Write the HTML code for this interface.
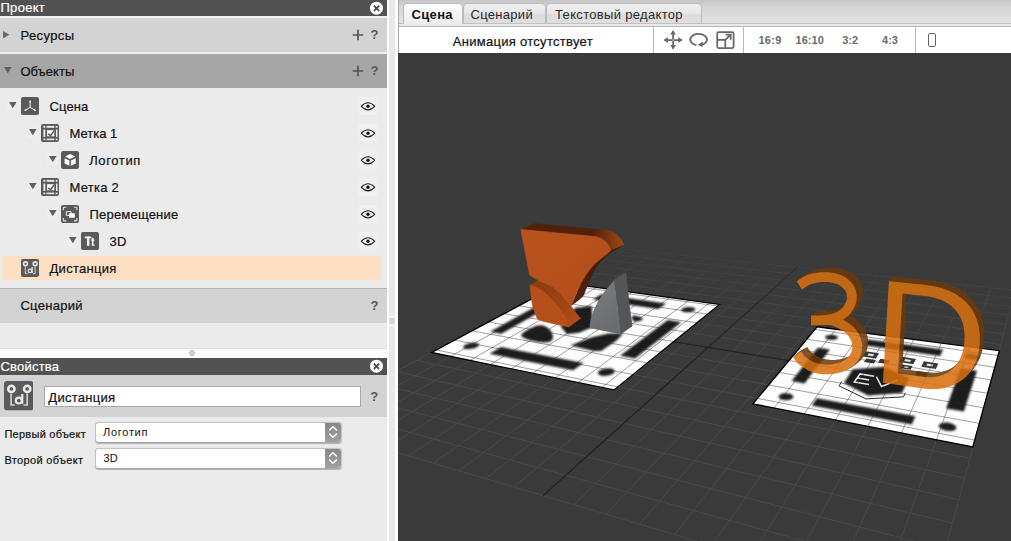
<!DOCTYPE html>
<html><head><meta charset="utf-8">
<style>
html,body{margin:0;padding:0;}
body{-webkit-text-stroke:0.2px;width:1011px;height:541px;overflow:hidden;background:#ebebeb;font-family:"Liberation Sans",sans-serif;font-size:13px;color:#111;position:relative;}
.abs{position:absolute;}
#left{position:absolute;left:0;top:0;width:387px;height:541px;background:#ebebeb;overflow:hidden;}
.hdr{position:absolute;left:0;width:387px;background:#525252;color:#fff;font-size:13px;line-height:15px;}
.hdr span{position:absolute;left:0px;top:0px;}
.sec{position:absolute;left:0;width:387px;}
.sec .t{position:absolute;left:20px;font-size:14px;color:#111;}
.tri-r{position:absolute;width:0;height:0;border-left:6px solid #666;border-top:3.5px solid transparent;border-bottom:3.5px solid transparent;}
.tri-d{position:absolute;width:0;height:0;border-top:6.3px solid #5e5e5e;border-left:3.9px solid transparent;border-right:3.9px solid transparent;}
.row{position:absolute;left:0;width:387px;height:27px;}
.row .lbl{position:absolute;top:4.7px;font-size:13px;line-height:17px;color:#111;white-space:nowrap;}
.ico{position:absolute;width:18px;height:18px;top:4px;}
.eye{position:absolute;left:359px;top:4px;width:18px;height:18px;background:#f0f0f0;}
.st{position:absolute;font-size:13px;line-height:17px;color:#111;white-space:nowrap;}
.pl{position:absolute;font-size:11px;line-height:14px;color:#111;white-space:nowrap;}
.sel{-webkit-text-stroke:0;position:absolute;left:94.6px;width:247px;height:20.5px;box-sizing:border-box;background:#fff;border:1px solid #c4c4c4;border-bottom-color:#a8a8a8;border-radius:4px;box-shadow:0 0.5px 1px rgba(0,0,0,0.25);overflow:hidden;}
.stp{position:absolute;right:-1px;top:-1px;width:16.3px;height:20.5px;background:linear-gradient(#868686,#a2a2a2);}
.tab{-webkit-text-stroke:0;position:absolute;top:3px;height:20.4px;box-sizing:border-box;border:0.9px solid #bcbcbc;border-bottom:none;border-radius:4.5px 4.5px 0 0;background:linear-gradient(#f0f0f0,#e6e6e6 52%,#dcdcdc 53%,#dfdfdf);color:#2a2a2a;font-size:13px;}
.tab span{position:absolute;top:2.3px;line-height:17px;white-space:nowrap;}
.vd{position:absolute;top:27px;width:0.9px;height:26px;background:#b8b8b8;}
.ar{position:absolute;top:32.6px;font-size:11px;line-height:14px;font-weight:bold;color:#6a6a6a;-webkit-text-stroke:0;white-space:nowrap;}
.q{position:absolute;font-size:13px;font-weight:bold;color:#575757;-webkit-text-stroke:0;}
</style></head><body>
<div id="left">
  <div class="hdr" style="top:0;height:15.5px;"><span style="left:0.5px;top:0px;letter-spacing:0.28px">Проект</span><svg class="abs" style="left:369px;top:0.5px" width="15" height="15"><circle cx="7.5" cy="7.2" r="6.5" fill="#fff"/><path d="M4.9 4.6L10.1 9.8M10.1 4.6L4.9 9.8" stroke="#4a4a4a" stroke-width="1.9"/></svg></div>
  <div class="abs" style="left:0;top:15.5px;width:387px;height:2px;background:#f2f2f2;"></div>
  <div class="sec" style="top:17.5px;height:34.5px;background:#d3d3d3;">
    <svg class="abs" style="left:3px;top:13.4px" width="7" height="8"><path d="M0 0V7.4L6.4 3.7Z" fill="#6a6a6a"/></svg>
    <div class="st" style="left:20.4px;top:9.4px;letter-spacing:0.4px">Ресурсы</div>
    <svg class="abs" style="left:352px;top:11.5px" width="12" height="12"><path d="M6 0.7V11.3M0.7 6H11.3" stroke="#555" stroke-width="1.7"/></svg>
    <div class="q" style="left:370.5px;top:9.5px">?</div>
  </div>
  <div class="abs" style="left:0;top:52px;width:387px;height:1.5px;background:#ececec;"></div>
  <div class="sec" style="top:53.5px;height:34.5px;background:#a6a6a6;">
    <svg class="abs" style="left:3.7px;top:13.5px" width="8" height="7"><path d="M0 0H7.6L3.8 6.3Z" fill="#606060"/></svg>
    <div class="st" style="left:20.4px;top:9.2px;letter-spacing:0.04px">Объекты</div>
    <svg class="abs" style="left:352px;top:11.5px" width="12" height="12"><path d="M6 0.7V11.3M0.7 6H11.3" stroke="#555" stroke-width="1.7"/></svg>
    <div class="q" style="left:370.5px;top:9.5px">?</div>
  </div>
  <div id="tree">
<svg width="0" height="0" style="position:absolute">
<defs>
<symbol id="i-scene" viewBox="0 0 18 18"><rect width="18" height="18" rx="2" fill="#5a5a5a"/><g stroke="#f0f0f0" stroke-width="1" stroke-linecap="round" fill="none"><path d="M9.1 10.3V4.6M9.1 10.3L4.6 13.1M9.1 10.3L13.8 13.1"/></g><circle cx="9.1" cy="4.5" r="0.9" fill="#fff"/><circle cx="4.5" cy="13.2" r="0.9" fill="#fff"/><circle cx="13.9" cy="13.2" r="0.9" fill="#fff"/></symbol>
<symbol id="i-marker" viewBox="0 0 18 18"><rect width="18" height="18" rx="2" fill="#5a5a5a"/><g fill="#ececec"><rect x="2.4" y="1.9" width="1.9" height="1.9"/><rect x="5.6" y="1.9" width="7.7" height="1.9"/><rect x="14.7" y="1.9" width="1.9" height="1.9"/><rect x="2.4" y="5.5" width="1.9" height="7.5"/><rect x="15" y="5.5" width="1.5" height="7.5"/><rect x="2.4" y="14.6" width="1.9" height="1.6"/><rect x="5.6" y="14.6" width="7.7" height="1.6"/><rect x="14.7" y="14.6" width="1.9" height="1.6"/></g><rect x="6.1" y="6.2" width="7.2" height="6.1" fill="#fff"/><path d="M7.2 9.7L9.4 11.8L13.2 6.7" stroke="#5a5a5a" stroke-width="1.5" fill="none"/></symbol>
<symbol id="i-cube" viewBox="0 0 18 18"><rect width="18" height="18" rx="2" fill="#5a5a5a"/><g fill="#fff"><path d="M9 2.9L14.2 5.5L9 7.9L4.2 5.5Z"/><path d="M3.6 7.2L8.4 9.4V14.7L3.6 12.5Z"/><path d="M9.9 9.4L14.7 7.2V12.5L9.9 14.7Z"/></g></symbol>
<symbol id="i-move" viewBox="0 0 18 18"><rect width="18" height="18" rx="2" fill="#5a5a5a"/><g stroke="#e6e6e6" stroke-width="1.1" fill="none"><path d="M2.3 5.3V3.3Q2.3 2.3 3.3 2.3H5.3M12.9 2.3H14.9Q15.9 2.3 15.9 3.3V5.3M15.9 12.9V14.9Q15.9 15.9 14.9 15.9H12.9M5.3 15.9H3.3Q2.3 15.9 2.3 14.9V12.9"/><rect x="5.3" y="6.5" width="4.8" height="4" rx="1"/></g><rect x="7.9" y="8.2" width="6" height="4.5" rx="0.6" fill="#fff"/></symbol>
<symbol id="i-text" viewBox="0 0 18 18"><rect width="18" height="18" rx="2" fill="#5a5a5a"/><g fill="#f4f4f4"><rect x="3.8" y="4.5" width="6.5" height="1.8"/><rect x="6" y="4.5" width="2.4" height="9.3"/><rect x="10.8" y="5.8" width="1.8" height="8"/><rect x="10.1" y="7.5" width="3.4" height="1.2"/><rect x="11.5" y="12.6" width="2" height="1.2"/></g></symbol>
<symbol id="i-dist" viewBox="0 0 18 18"><rect width="18" height="18" rx="2" fill="#5a5a5a"/><g stroke="#e8e8e8" fill="none"><circle cx="4.5" cy="4.8" r="1.9" stroke-width="1.6"/><circle cx="14.1" cy="4.8" r="1.9" stroke-width="1.6"/><path d="M4.3 7.6V14.6H6.6M14.1 7.6V14.6H11.8" stroke-width="1" stroke="#d4d4d4"/><circle cx="9" cy="11.9" r="1.8" stroke-width="1.3"/><path d="M11.1 7.9V13.9" stroke-width="1.3"/></g></symbol>
<symbol id="i-eye" viewBox="0 0 18 18"><path d="M2.3 9.4Q9 2.2 15.7 9.4Q9 16.4 2.3 9.4Z" fill="#f6f6f6" stroke="#222" stroke-width="1.1"/><circle cx="9" cy="9.3" r="1.7" fill="#111"/></symbol>
</defs></svg>
<div class="row" style="top:93px"><div class="abs" style="left:7px;top:6.5px;width:11px;height:11px;background:#eeeeee"></div><svg class="abs" style="left:9px;top:9px" width="8" height="7"><path d="M0 0H7.6L3.8 6.3Z" fill="#606060"/></svg><svg class="ico" style="left:21px"><use href="#i-scene"/></svg><div class="lbl" style="left:49.5px;letter-spacing:0.12px">Сцена</div><div class="eye"><svg width="18" height="18" style="position:absolute;left:0;top:0"><use href="#i-eye"/></svg></div></div>
<div class="row" style="top:120px"><div class="abs" style="left:27px;top:6.5px;width:11px;height:11px;background:#eeeeee"></div><svg class="abs" style="left:29px;top:9px" width="8" height="7"><path d="M0 0H7.6L3.8 6.3Z" fill="#606060"/></svg><svg class="ico" style="left:41px"><use href="#i-marker"/></svg><div class="lbl" style="left:69.5px;letter-spacing:0px">Метка 1</div><div class="eye"><svg width="18" height="18" style="position:absolute;left:0;top:0"><use href="#i-eye"/></svg></div></div>
<div class="row" style="top:147px"><div class="abs" style="left:47px;top:6.5px;width:11px;height:11px;background:#eeeeee"></div><svg class="abs" style="left:49px;top:9px" width="8" height="7"><path d="M0 0H7.6L3.8 6.3Z" fill="#606060"/></svg><svg class="ico" style="left:61px"><use href="#i-cube"/></svg><div class="lbl" style="left:89.2px;letter-spacing:0.62px">Логотип</div><div class="eye"><svg width="18" height="18" style="position:absolute;left:0;top:0"><use href="#i-eye"/></svg></div></div>
<div class="row" style="top:174px"><div class="abs" style="left:27px;top:6.5px;width:11px;height:11px;background:#eeeeee"></div><svg class="abs" style="left:29px;top:9px" width="8" height="7"><path d="M0 0H7.6L3.8 6.3Z" fill="#606060"/></svg><svg class="ico" style="left:41px"><use href="#i-marker"/></svg><div class="lbl" style="left:69.5px;letter-spacing:0.24px">Метка 2</div><div class="eye"><svg width="18" height="18" style="position:absolute;left:0;top:0"><use href="#i-eye"/></svg></div></div>
<div class="row" style="top:201px"><div class="abs" style="left:47px;top:6.5px;width:11px;height:11px;background:#eeeeee"></div><svg class="abs" style="left:49px;top:9px" width="8" height="7"><path d="M0 0H7.6L3.8 6.3Z" fill="#606060"/></svg><svg class="ico" style="left:61px"><use href="#i-move"/></svg><div class="lbl" style="left:89.5px;letter-spacing:0.2px">Перемещение</div><div class="eye"><svg width="18" height="18" style="position:absolute;left:0;top:0"><use href="#i-eye"/></svg></div></div>
<div class="row" style="top:228px"><div class="abs" style="left:67px;top:6.5px;width:11px;height:11px;background:#eeeeee"></div><svg class="abs" style="left:69px;top:9px" width="8" height="7"><path d="M0 0H7.6L3.8 6.3Z" fill="#606060"/></svg><svg class="ico" style="left:81px"><use href="#i-text"/></svg><div class="lbl" style="left:109.5px;letter-spacing:0.3px">3D</div><div class="eye"><svg width="18" height="18" style="position:absolute;left:0;top:0"><use href="#i-eye"/></svg></div></div>
<div class="row" style="top:255px"><div class="abs" style="left:2px;top:1.4px;width:380px;height:23.8px;background:#fde0c4;"></div><svg class="ico" style="left:21px"><use href="#i-dist"/></svg><div class="lbl" style="left:49.5px;letter-spacing:0.28px">Дистанция</div></div>
</div>
  <div class="abs" style="left:0;top:287.5px;width:387px;height:1px;background:#b5b5b5;"></div>
  <div class="sec" style="top:288.5px;height:34px;background:#d3d3d3;">
    <div class="st" style="left:20.4px;top:8.7px;letter-spacing:0.3px">Сценарий</div>
    <div class="q" style="left:370.5px;top:9.5px">?</div>
  </div>
  <div class="abs" style="left:0;top:347.9px;width:387px;height:0.8px;background:#dedede;"></div><div class="abs" style="left:0;top:348.7px;width:387px;height:9.3px;background:#fdfdfd;"></div><div class="abs" style="left:189px;top:350px;width:6px;height:6px;box-sizing:border-box;border-radius:50%;background:#d2d2d2;border:0.6px solid #bdbdbd;"></div>
  <div class="hdr" style="top:358px;height:17px;"><span style="left:0.5px;top:1px;letter-spacing:0.2px">Свойства</span><svg class="abs" style="left:369px;top:1.4px" width="15" height="15"><circle cx="7.5" cy="7.2" r="6.5" fill="#fff"/><path d="M4.9 4.6L10.1 9.8M10.1 4.6L4.9 9.8" stroke="#4a4a4a" stroke-width="1.9"/></svg></div>
  <div class="sec" style="top:375px;height:41.7px;background:#d3d3d3;">
    <svg class="abs" style="left:3.7px;top:6px" width="29.6" height="29.6"><use href="#i-dist"/></svg>
    <div class="abs" style="left:44px;top:10.5px;width:316.5px;height:21.4px;box-sizing:border-box;background:#fff;border:1px solid #a9a9a9;"></div>
    <div class="st" style="left:48.3px;top:14.1px;letter-spacing:0.28px">Дистанция</div>
    <div class="q" style="left:370.3px;top:13.5px">?</div>
  </div>
  <div class="pl" style="left:4.4px;top:426.7px;letter-spacing:0.27px">Первый объект</div>
  <div class="pl" style="left:4.4px;top:453.3px;letter-spacing:0.35px">Второй объект</div>
  <div class="sel" style="top:422.1px"><div class="pl" style="left:7.5px;top:1.9px;letter-spacing:0.7px">Логотип</div><div class="stp"><svg width="16" height="20"><path d="M4.6 8L8 4.7L11.4 8M4.6 12L8 15.3L11.4 12" stroke="#fff" stroke-width="1.5" fill="none" stroke-linecap="round" stroke-linejoin="round"/></svg></div></div>
  <div class="sel" style="top:448px"><div class="pl" style="left:7.8px;top:1.6px;letter-spacing:0.2px">3D</div><div class="stp"><svg width="16" height="20"><path d="M4.6 8L8 4.7L11.4 8M4.6 12L8 15.3L11.4 12" stroke="#fff" stroke-width="1.5" fill="none" stroke-linecap="round" stroke-linejoin="round"/></svg></div></div>
</div>
<div class="abs" style="left:387px;top:0;width:11px;height:541px;background:#fcfcfc;"></div>
<div class="abs" style="left:389.3px;top:0;width:5.8px;height:541px;background:#e9e9e9;"></div>
<div class="abs" style="left:389.3px;top:316px;width:5.8px;height:9.6px;background:#fafafa;"></div>
<div class="abs" style="left:389.3px;top:316.8px;width:5.8px;height:8px;background:#e9e9e9;"></div>
<div class="abs" style="left:388.9px;top:317.9px;width:5.8px;height:5.8px;border-radius:50%;background:#d4d4d4;"></div>
<div id="right" class="abs" style="left:398px;top:0;width:613px;height:541px;background:#3a3a3a;overflow:hidden;">
<!--SCENE--><svg class="abs" style="left:0;top:53px" width="613" height="488" viewBox="0 0 613 488">
<defs>
<filter id="bl1" x="-5%" y="-5%" width="110%" height="110%"><feGaussianBlur stdDeviation="1.2 0.85"/></filter>
<filter id="bl2" x="-5%" y="-5%" width="110%" height="110%"><feGaussianBlur stdDeviation="1.25 0.95"/></filter>
<filter id="bl3" x="-5%" y="-5%" width="110%" height="110%"><feGaussianBlur stdDeviation="0.7 0.55"/></filter>
<linearGradient id="gfade" x1="0" y1="190" x2="0" y2="330" gradientUnits="userSpaceOnUse"><stop offset="0" stop-color="#fff" stop-opacity="0.35"/><stop offset="1" stop-color="#fff" stop-opacity="1"/></linearGradient>
<mask id="gm" maskUnits="userSpaceOnUse" x="0" y="0" width="613" height="488"><rect width="613" height="488" fill="url(#gfade)"/></mask>
<clipPath id="c1"><polygon points="33.5,299.5 216.0,336.9 321.5,251.4 164.0,229.6"/></clipPath>
<clipPath id="c2"><polygon points="354.9,350.8 574.8,394.0 601.4,297.7 419.1,273.8"/></clipPath>
</defs>
<rect width="613" height="488" fill="#3a3a3a"/>
<g mask="url(#gm)" fill="none"><path d="M-99.7 370.3L227.7 196.4M-99.7 370.3L531.0 556.6M-79.3 376.3L243.1 198.0M-72.9 356.0L539.6 524.8M-58.2 382.5L258.9 199.7M-47.7 342.6L547.4 496.2M-36.2 389.0L275.1 201.4M-24.2 330.1L554.4 470.2M-13.3 395.8L291.6 203.1M-2.1 318.4L560.8 446.7M10.4 402.8L308.5 204.9M18.7 307.4L566.6 425.1M35.2 410.1L325.8 206.7M38.2 297.0L571.9 405.3M61.0 417.7L343.5 208.6M56.7 287.2L576.9 387.2M87.8 425.7L361.6 210.5M74.2 277.9L581.4 370.4M115.9 434.0L380.1 212.4M90.7 269.1L585.6 354.8M175.9 451.7L418.5 216.5M121.3 252.9L593.2 326.9M207.9 461.1L438.4 218.6M135.4 245.4L596.6 314.3M241.6 471.1L458.9 220.7M148.9 238.2L599.8 302.5M276.8 481.5L479.8 222.9M161.7 231.4L602.8 291.5M313.9 492.4L501.3 225.2M174.0 224.9L605.6 281.1M352.8 503.9L523.3 227.5M185.7 218.7L608.2 271.4M393.8 516.1L545.9 229.9M196.9 212.7L610.7 262.2M437.1 528.8L569.1 232.4M207.6 207.0L613.1 253.5M482.7 542.3L592.9 234.9M217.8 201.6L615.3 245.2M531.0 556.6L617.4 237.4M227.7 196.4L617.4 237.4" stroke="#4c4c4c" stroke-width="0.85"/><path d="M145.2 442.6L399.1 214.4M106.4 260.8L589.5 340.3" stroke="#202020" stroke-width="1.2"/></g>
<polygon points="33.5,299.5 216.0,336.9 321.5,251.4 164.0,229.6" fill="#fdfdfd"/>
<g clip-path="url(#c1)"><g filter="url(#bl1)" fill="#1f1f1f"><polygon points="79.1,294.0 80.4,293.0 81.1,292.0 81.0,291.1 80.1,290.4 78.5,289.9 76.5,289.7 74.1,289.8 71.6,290.2 69.3,290.9 67.3,291.7 66.0,292.7 65.3,293.7 65.3,294.7 66.2,295.4 67.7,295.9 69.8,296.1 72.2,296.0 74.8,295.6 77.1,294.9"/><polygon points="215.4,320.5 216.4,319.3 216.7,318.1 216.2,317.0 214.8,316.1 212.9,315.6 210.5,315.3 207.9,315.4 205.3,315.9 203.0,316.7 201.2,317.7 200.1,318.9 199.8,320.1 200.3,321.2 201.6,322.1 203.5,322.7 206.0,322.9 208.6,322.8 211.3,322.3 213.6,321.5"/><polygon points="296.5,257.5 297.2,256.7 297.2,255.9 296.5,255.1 295.2,254.5 293.4,254.2 291.4,254.0 289.2,254.1 287.1,254.5 285.3,255.0 284.0,255.7 283.3,256.5 283.2,257.4 283.9,258.1 285.1,258.7 286.9,259.1 289.0,259.3 291.2,259.2 293.4,258.8 295.2,258.3"/><polygon points="174.7,239.9 175.6,239.2 175.9,238.5 175.6,237.9 174.6,237.3 173.2,237.0 171.4,236.9 169.3,237.0 167.3,237.3 165.5,237.8 164.0,238.4 163.1,239.1 162.7,239.8 163.0,240.5 163.9,241.0 165.4,241.4 167.3,241.5 169.3,241.4 171.4,241.1 173.2,240.6"/><polygon points="91.6,300.8 175.1,317.3 185.6,309.9 103.0,294.1"/><polygon points="222.1,302.8 236.9,305.5 283.4,269.2 269.7,267.1"/><polygon points="92.2,278.7 103.4,280.7 157.5,250.1 146.9,248.4"/><polygon points="194.8,246.4 260.3,256.0 268.2,250.4 203.4,241.2"/><polygon points="123.6,281.0 127.6,277.9 132.8,275.1 139.0,272.5 144.3,272.3 148.9,274.3 152.3,277.2 154.4,280.8 155.0,284.2 154.0,287.3 151.2,289.1 146.5,289.6 140.5,289.1 133.2,287.5 127.5,285.7 123.5,283.6"/><polygon points="236.1,262.6 241.2,263.5 244.1,264.7 244.8,266.1 243.9,267.2 241.3,268.1 238.6,268.4 235.8,268.2 234.2,266.6 233.8,263.6"/><polygon points="162.5,273.2 177.3,254.7 193.8,252.9 194.7,274.1 181.0,279.7 168.8,281.0"/><polygon points="172.5,292.6 193.9,284.3 210.5,280.6 225.2,280.6 217.9,288.0 203.1,298.1 195.7,298.1"/></g><path d="M-99.7 370.3L227.7 196.4M-99.7 370.3L531.0 556.6M-79.3 376.3L243.1 198.0M-72.9 356.0L539.6 524.8M-58.2 382.5L258.9 199.7M-47.7 342.6L547.4 496.2M-36.2 389.0L275.1 201.4M-24.2 330.1L554.4 470.2M-13.3 395.8L291.6 203.1M-2.1 318.4L560.8 446.7M10.4 402.8L308.5 204.9M18.7 307.4L566.6 425.1M35.2 410.1L325.8 206.7M38.2 297.0L571.9 405.3M61.0 417.7L343.5 208.6M56.7 287.2L576.9 387.2M87.8 425.7L361.6 210.5M74.2 277.9L581.4 370.4M115.9 434.0L380.1 212.4M90.7 269.1L585.6 354.8M175.9 451.7L418.5 216.5M121.3 252.9L593.2 326.9M207.9 461.1L438.4 218.6M135.4 245.4L596.6 314.3M241.6 471.1L458.9 220.7M148.9 238.2L599.8 302.5M276.8 481.5L479.8 222.9M161.7 231.4L602.8 291.5M313.9 492.4L501.3 225.2M174.0 224.9L605.6 281.1M352.8 503.9L523.3 227.5M185.7 218.7L608.2 271.4M393.8 516.1L545.9 229.9M196.9 212.7L610.7 262.2M437.1 528.8L569.1 232.4M207.6 207.0L613.1 253.5M482.7 542.3L592.9 234.9M217.8 201.6L615.3 245.2M531.0 556.6L617.4 237.4M227.7 196.4L617.4 237.4M145.2 442.6L399.1 214.4M106.4 260.8L589.5 340.3" stroke="#2a2a2a" stroke-width="0.55" stroke-opacity="0.8" fill="none"/></g>
<polygon points="33.5,299.5 216.0,336.9 321.5,251.4 164.0,229.6" fill="none" stroke="#000" stroke-width="1.3"/>
<polygon points="354.9,350.8 574.8,394.0 601.4,297.7 419.1,273.8" fill="#fdfdfd"/>
<g clip-path="url(#c2)"><g filter="url(#bl2)" fill="#1f1f1f"><polygon points="394.8,345.0 395.3,343.9 395.0,342.8 394.0,341.8 392.4,340.9 390.5,340.4 388.2,340.2 386.0,340.3 383.9,340.7 382.2,341.5 381.1,342.4 380.6,343.5 380.9,344.6 381.8,345.6 383.4,346.5 385.4,347.0 387.6,347.3 389.9,347.1 392.0,346.7 393.7,345.9"/><polygon points="558.2,375.4 558.2,374.1 557.3,372.8 555.7,371.5 553.5,370.5 550.9,369.8 548.2,369.5 545.6,369.7 543.4,370.2 541.8,371.1 540.9,372.2 540.9,373.5 541.7,374.8 543.3,376.1 545.5,377.1 548.1,377.8 550.9,378.1 553.5,378.0 555.8,377.5 557.4,376.6"/><polygon points="581.2,304.7 581.2,303.7 580.4,302.8 578.9,302.0 577.0,301.3 574.8,300.8 572.5,300.7 570.3,300.8 568.5,301.2 567.2,301.8 566.5,302.6 566.5,303.5 567.3,304.5 568.7,305.3 570.6,306.0 572.9,306.5 575.2,306.6 577.4,306.5 579.3,306.1 580.6,305.5"/><polygon points="439.6,285.2 439.8,284.4 439.5,283.6 438.5,282.9 437.1,282.3 435.3,282.0 433.4,281.8 431.4,281.9 429.7,282.3 428.3,282.8 427.4,283.5 427.1,284.3 427.5,285.1 428.4,285.8 429.8,286.4 431.6,286.8 433.6,286.9 435.6,286.8 437.3,286.5 438.7,285.9"/><polygon points="413.7,352.6 513.8,371.5 517.4,363.2 418.8,345.2"/><polygon points="548.1,355.5 565.9,358.6 579.0,317.8 562.7,315.4"/><polygon points="393.6,328.1 406.6,330.4 431.9,296.5 419.8,294.7"/><polygon points="466.0,292.3 542.2,302.9 545.0,296.6 469.8,286.5"/><polygon points="486.3,313.8 511.1,325.1 503.9,339.9 470.0,342.4 445.9,330.1 454.8,316.2"/></g><g filter="url(#bl3)"><g fill="#383838"><polygon points="464.5,303.4 477.9,305.4 481.0,300.2 467.8,298.3"/><polygon points="501.2,309.1 515.3,311.2 518.0,305.9 504.1,303.8"/><polygon points="523.3,313.8 537.9,316.0 540.3,310.4 525.9,308.3"/><polygon points="465.9,309.1 475.8,310.6 478.0,306.9 468.3,305.4"/><polygon points="480.1,309.6 490.1,311.1 492.2,307.3 482.3,305.8"/><polygon points="502.2,315.3 512.6,316.8 514.5,312.9 504.2,311.4"/><polygon points="517.2,322.0 527.9,323.7 529.7,319.6 519.1,318.0"/></g><g fill="#e4e4e4"><polygon points="469.4,302.4 475.0,303.2 476.2,301.2 470.6,300.4"/><polygon points="506.2,308.1 512.0,308.9 513.1,306.9 507.2,306.1"/><polygon points="528.3,312.7 534.4,313.6 535.3,311.5 529.3,310.6"/><polygon points="506.0,314.5 510.0,315.1 510.7,313.7 506.8,313.1"/></g><path d="M476.2 323.2L462.1 320.9L456.3 329.0L471.0 331.4M459.2 324.9L471.2 326.9M478.4 323.7L483.5 333.5L499.5 327.1" stroke="#e8e8e8" stroke-width="1.5" fill="none"/><path d="M443.8 328.5L441.0 332.9L468.0 345.9L505.4 343.9L507.4 339.7" stroke="#2c2c2c" stroke-width="1" fill="none"/></g><path d="M-99.7 370.3L227.7 196.4M-99.7 370.3L531.0 556.6M-79.3 376.3L243.1 198.0M-72.9 356.0L539.6 524.8M-58.2 382.5L258.9 199.7M-47.7 342.6L547.4 496.2M-36.2 389.0L275.1 201.4M-24.2 330.1L554.4 470.2M-13.3 395.8L291.6 203.1M-2.1 318.4L560.8 446.7M10.4 402.8L308.5 204.9M18.7 307.4L566.6 425.1M35.2 410.1L325.8 206.7M38.2 297.0L571.9 405.3M61.0 417.7L343.5 208.6M56.7 287.2L576.9 387.2M87.8 425.7L361.6 210.5M74.2 277.9L581.4 370.4M115.9 434.0L380.1 212.4M90.7 269.1L585.6 354.8M175.9 451.7L418.5 216.5M121.3 252.9L593.2 326.9M207.9 461.1L438.4 218.6M135.4 245.4L596.6 314.3M241.6 471.1L458.9 220.7M148.9 238.2L599.8 302.5M276.8 481.5L479.8 222.9M161.7 231.4L602.8 291.5M313.9 492.4L501.3 225.2M174.0 224.9L605.6 281.1M352.8 503.9L523.3 227.5M185.7 218.7L608.2 271.4M393.8 516.1L545.9 229.9M196.9 212.7L610.7 262.2M437.1 528.8L569.1 232.4M207.6 207.0L613.1 253.5M482.7 542.3L592.9 234.9M217.8 201.6L615.3 245.2M531.0 556.6L617.4 237.4M227.7 196.4L617.4 237.4M145.2 442.6L399.1 214.4M106.4 260.8L589.5 340.3" stroke="#2a2a2a" stroke-width="0.55" stroke-opacity="0.8" fill="none"/></g>
<polygon points="354.9,350.8 574.8,394.0 601.4,297.7 419.1,273.8" fill="none" stroke="#000" stroke-width="1.3"/>
<defs>
<linearGradient id="gTop" gradientUnits="userSpaceOnUse" x1="196" y1="0" x2="226" y2="0"><stop offset="0" stop-color="#52210b"/><stop offset="0.5" stop-color="#7c3511"/><stop offset="1" stop-color="#a54a17"/></linearGradient>
<linearGradient id="gBand" gradientUnits="userSpaceOnUse" x1="136" y1="232" x2="180" y2="270"><stop offset="0" stop-color="#8a3b10"/><stop offset="0.6" stop-color="#a04616"/><stop offset="1" stop-color="#b04e19"/></linearGradient>
<linearGradient id="gFront" gradientUnits="userSpaceOnUse" x1="125" y1="180" x2="200" y2="260"><stop offset="0" stop-color="#b9521d"/><stop offset="1" stop-color="#b24e1a"/></linearGradient>
<linearGradient id="gInner" gradientUnits="userSpaceOnUse" x1="215" y1="195" x2="178" y2="250"><stop offset="0" stop-color="#3a1707"/><stop offset="1" stop-color="#54230c"/></linearGradient>
<linearGradient id="gGl" gradientUnits="userSpaceOnUse" x1="195" y1="240" x2="222" y2="275"><stop offset="0" stop-color="#76787b"/><stop offset="1" stop-color="#696b6e"/></linearGradient>
</defs>
<polygon points="122.9,176.5 136.6,170.3 208.4,176.9 208.4,176.9 209.1,177.1 209.9,177.3 211.0,177.6 212.2,178.0 213.4,178.4 214.6,178.8 215.7,179.3 216.7,179.8 217.6,180.4 218.4,181.1 219.2,181.8 219.9,182.6 220.7,183.4 221.3,184.2 222.0,185.0 222.6,185.8 223.2,186.6 223.7,187.4 224.3,188.3 224.8,189.1 225.2,189.9 225.6,190.6 225.9,191.2 226.2,191.7 212.9,197.6 212.9,197.6 212.7,197.1 212.5,196.5 212.2,195.8 211.9,195.0 211.5,194.1 211.1,193.3 210.7,192.4 210.2,191.7 209.7,191.0 209.1,190.3 208.4,189.5 207.7,188.8 207.0,188.2 206.2,187.5 205.5,186.9 204.8,186.4 204.0,185.9 203.2,185.5 202.4,185.1 201.5,184.8 200.7,184.5 200.0,184.2 199.4,184.0 198.9,183.8" fill="url(#gTop)"/>
<polygon points="212.9,197.6 212.3,198.1 211.5,198.8 210.5,199.6 209.5,200.4 208.3,201.4 207.2,202.3 206.0,203.3 204.9,204.2 203.8,205.1 202.7,205.9 201.6,206.8 200.5,207.7 199.3,208.6 198.2,209.5 197.1,210.5 196.0,211.6 194.9,212.7 193.9,214.0 192.8,215.2 191.8,216.5 190.8,217.9 189.8,219.2 188.8,220.6 187.9,222.0 187.0,223.4 186.1,224.9 185.2,226.3 184.4,227.8 183.5,229.3 182.7,230.8 182.0,232.3 181.2,233.8 180.5,235.3 179.8,236.8 179.1,238.4 178.5,240.0 177.8,241.5 177.2,242.9 176.6,244.3 176.1,245.6 175.6,246.8 175.0,248.0 174.5,249.1 174.0,250.2 173.6,251.2 173.2,252.0 172.9,252.7 172.6,253.3 172.6,253.3 173.5,252.6 174.9,251.6 176.4,250.5 178.2,249.2 179.9,247.9 181.6,246.6 183.0,245.3 184.2,244.2 185.0,243.2 185.7,242.3 186.1,241.4 186.5,240.6 186.8,239.7 187.1,238.8 187.5,237.9 187.9,236.8 188.4,235.6 188.9,234.4 189.5,233.1 190.0,231.8 190.6,230.4 191.1,229.1 191.7,227.7 192.3,226.4 192.9,225.1 193.5,223.8 194.1,222.5 194.7,221.1 195.4,219.8 196.0,218.5 196.7,217.3 197.5,216.0 198.3,214.7 199.2,213.5 200.0,212.2 201.0,211.0 201.9,209.8 202.9,208.6 203.9,207.5 204.9,206.4 205.9,205.4 206.9,204.4 208.0,203.5 209.0,202.6 210.1,201.7 211.3,200.8 212.5,199.9 213.8,199.0 215.3,198.0 216.9,197.0 218.7,195.9 220.6,194.9 222.3,193.9 223.9,193.0 225.2,192.3 226.2,191.7" fill="url(#gInner)"/>
<polygon points="132.1,232.2 132.6,232.4 133.4,232.6 134.2,232.8 135.1,233.1 136.2,233.4 137.2,233.8 138.2,234.2 139.2,234.7 140.1,235.2 141.1,235.7 142.0,236.3 143.0,236.9 144.0,237.6 145.0,238.4 146.1,239.3 147.3,240.3 148.6,241.5 149.9,242.9 151.4,244.3 152.8,245.9 154.3,247.6 155.8,249.2 157.2,250.9 158.5,252.5 159.8,254.1 161.1,255.8 162.4,257.6 163.6,259.4 164.8,261.1 165.9,262.7 166.9,264.3 167.7,265.7 168.4,267.0 169.0,268.3 169.4,269.5 169.8,270.6 170.1,271.6 170.3,272.5 170.5,273.3 170.7,273.9 182.6,265.5 182.2,265.0 181.8,264.4 181.2,263.7 180.5,262.9 179.9,262.1 179.2,261.2 178.5,260.4 177.9,259.6 177.3,258.9 176.8,258.1 176.2,257.4 175.7,256.6 175.1,255.9 174.5,255.1 173.9,254.3 173.3,253.5 172.7,252.7 172.1,251.9 171.5,251.1 170.9,250.3 170.3,249.4 169.5,248.5 168.7,247.5 167.7,246.4 166.6,245.2 165.4,243.8 164.1,242.4 162.7,240.8 161.3,239.3 159.8,237.9 158.2,236.5 156.5,235.2 154.6,234.0 152.5,232.8 150.2,231.7 147.9,230.6 145.7,229.6 143.6,228.7 142.0,228.0 140.7,227.4" fill="url(#gBand)" stroke="#9a4314" stroke-width="0.6"/>
<polygon points="170.7,273.9 170.5,273.3 170.3,272.5 170.1,271.6 169.8,270.6 169.4,269.5 169.0,268.3 168.4,267.0 167.7,265.7 166.9,264.3 165.9,262.7 164.8,261.1 163.6,259.4 162.4,257.6 161.1,255.8 159.8,254.1 158.5,252.5 157.2,250.9 155.8,249.2 154.3,247.6 152.8,245.9 151.4,244.3 149.9,242.9 148.6,241.5 147.3,240.3 146.1,239.3 145.0,238.4 144.0,237.6 143.0,236.9 142.0,236.3 141.1,235.7 140.1,235.2 139.2,234.7 138.2,234.2 137.2,233.8 136.2,233.4 135.1,233.1 134.2,232.8 133.4,232.6 132.6,232.4 132.1,232.2 170.7,273.9 169.6,273.7 168.2,273.4 166.5,273.0 164.6,272.7 162.5,272.2 160.5,271.8 158.4,271.3 156.5,270.9 154.6,270.4 152.5,270.0 150.3,269.4 148.1,268.9 146.1,268.4 144.2,267.9 142.5,267.3 141.2,266.8 140.2,266.3 139.6,265.9 139.2,265.5 139.0,265.1 138.8,264.7 138.7,264.2 138.5,263.5 138.2,262.7 137.8,261.7 137.3,260.6 136.8,259.3 136.3,258.0 135.8,256.6 135.4,255.2 135.0,253.8 134.6,252.5 134.3,251.2 134.1,249.9 133.9,248.7 133.7,247.4 133.5,246.1 133.4,244.8 133.2,243.6 133.1,242.3 132.9,241.0 132.8,239.5 132.6,238.1 132.5,236.6 132.4,235.2 132.3,234.0 132.2,233.0 132.1,232.2" fill="#b5501b" stroke="#b5501b" stroke-width="0.7"/>
<polygon points="122.9,176.5 198.9,183.8 198.9,183.8 199.4,184.0 200.0,184.2 200.7,184.5 201.5,184.8 202.4,185.1 203.2,185.5 204.0,185.9 204.8,186.4 205.5,186.9 206.2,187.5 207.0,188.2 207.7,188.8 208.4,189.5 209.1,190.3 209.7,191.0 210.2,191.7 210.7,192.4 211.1,193.3 211.5,194.1 211.9,195.0 212.2,195.8 212.5,196.5 212.7,197.1 212.9,197.6 212.9,197.6 212.3,198.1 211.5,198.8 210.5,199.6 209.5,200.4 208.3,201.4 207.2,202.3 206.0,203.3 204.9,204.2 203.8,205.1 202.7,205.9 201.6,206.8 200.5,207.7 199.3,208.6 198.2,209.5 197.1,210.5 196.0,211.6 194.9,212.7 193.9,214.0 192.8,215.2 191.8,216.5 190.8,217.9 189.8,219.2 188.8,220.6 187.9,222.0 187.0,223.4 186.1,224.9 185.2,226.3 184.4,227.8 183.5,229.3 182.7,230.8 182.0,232.3 181.2,233.8 180.5,235.3 179.8,236.8 179.1,238.4 178.5,240.0 177.8,241.5 177.2,242.9 176.6,244.3 176.1,245.6 175.6,246.8 175.0,248.0 174.5,249.1 174.0,250.2 173.6,251.2 173.2,252.0 172.9,252.7 172.6,253.3 172.6,253.3 172.3,252.8 171.9,252.2 171.4,251.4 170.9,250.5 170.2,249.6 169.5,248.6 168.6,247.5 167.7,246.4 166.6,245.2 165.5,243.8 164.2,242.4 162.8,240.9 161.3,239.3 159.8,237.9 158.2,236.5 156.5,235.2 154.7,234.0 152.7,233.0 150.6,231.9 148.5,230.9 146.3,230.0 144.3,229.1 142.4,228.2 140.7,227.4 139.2,226.6 137.7,225.8 136.4,225.0 135.2,224.2 134.1,223.5 133.1,222.9 132.3,222.4 131.6,222.0" fill="url(#gFront)" stroke="#b6501b" stroke-width="0.7" stroke-linejoin="round"/>
<polygon points="216.1,227.2 227.8,219.6 229.2,232.8 231.3,253.6 234.1,273.0 222.3,281.3 219.5,253.6" fill="#535558" stroke="#535558" stroke-width="0.8"/>
<polygon points="216.1,227.2 216.1,227.2 215.3,228.2 214.2,229.4 212.9,230.9 211.4,232.6 209.9,234.4 208.4,236.2 207.0,238.0 205.7,239.7 204.5,241.4 203.4,243.1 202.3,244.8 201.2,246.6 200.2,248.3 199.2,250.1 198.3,251.9 197.4,253.6 196.6,255.4 195.8,257.2 195.1,259.1 194.5,260.9 193.9,262.7 193.3,264.4 192.9,266.0 192.5,267.4 192.2,268.7 192.0,269.9 191.9,271.0 191.8,272.1 191.8,273.0 191.8,273.8 191.8,274.5 191.8,275.0 222.3,281.3 219.5,253.6" fill="url(#gGl)"/>
<g opacity="0.86" fill="none" stroke-linejoin="round">
<g stroke="#6b3a0c" stroke-width="9.8"><path d="M407.3 227.7L408.1 227.2L409.1 226.5L410.3 225.7L411.7 224.8L413.2 223.9L414.7 223.1L416.4 222.3L418.0 221.7L419.7 221.2L421.5 220.8L423.5 220.4L425.5 220.0L427.5 219.8L429.5 219.6L431.6 219.5L433.5 219.5L435.4 219.6L437.4 219.8L439.4 220.0L441.4 220.4L443.3 220.8L445.2 221.3L446.9 221.9L448.5 222.6L450.0 223.4L451.4 224.3L452.8 225.4L454.0 226.5L455.2 227.7L456.2 228.9L457.1 230.2L457.9 231.4L458.5 232.7L459.0 234.0L459.4 235.4L459.7 236.8L459.8 238.2L459.9 239.7L459.8 241.1L459.6 242.5L459.3 243.9L458.8 245.4L458.2 246.9L457.5 248.3L456.7 249.8L455.8 251.1L454.9 252.4L453.9 253.6L452.8 254.7L451.6 255.7L450.4 256.6L449.0 257.5L447.7 258.3L446.2 259.0L444.8 259.7L443.4 260.3L442.0 260.8L440.5 261.2L439.0 261.5L437.5 261.8L435.9 262.0L434.4 262.2L432.8 262.4L431.3 262.5L429.7 262.6L428.0 262.7L426.2 262.7L424.4 262.7L422.8 262.7L421.3 262.7L420.0 262.7L419.1 262.7M431.3 262.6L432.2 262.6L433.4 262.6L434.8 262.6L436.4 262.6L438.1 262.7L439.9 262.9L441.7 263.3L443.4 263.8L445.2 264.6L447.1 265.5L449.1 266.6L451.2 267.8L453.2 269.0L455.1 270.4L456.8 271.7L458.3 273.1L459.6 274.5L460.7 275.9L461.7 277.5L462.6 279.0L463.4 280.6L464.0 282.2L464.5 283.8L464.9 285.3L465.1 286.8L465.3 288.4L465.2 290.0L465.1 291.6L464.8 293.1L464.4 294.7L464.0 296.1L463.4 297.5L462.7 298.8L462.0 300.1L461.1 301.4L460.1 302.6L459.1 303.8L457.9 304.9L456.6 305.9L455.2 306.8L453.7 307.6L451.9 308.4L450.1 309.2L448.2 309.8L446.2 310.4L444.1 310.8L442.1 311.2L440.1 311.5L438.1 311.7L436.0 311.8L433.8 311.8L431.7 311.7L429.5 311.5L427.5 311.3L425.4 310.9L423.5 310.4L421.6 309.8L419.8 309.0L417.9 308.1L416.1 307.0L414.4 306.0L412.9 304.9L411.4 303.9L410.2 303.0L409.1 302.1L408.2 301.1L407.5 300.2L406.8 299.2L406.3 298.4L405.8 297.6L405.4 296.9L405.1 296.4"/><path d="M406.3 228.5L407.1 228.0L408.1 227.3L409.3 226.5L410.7 225.6L412.2 224.7L413.7 223.8L415.4 223.1L417.0 222.5L418.7 222.0L420.5 221.5L422.5 221.1L424.5 220.8L426.5 220.5L428.5 220.4L430.6 220.3L432.5 220.3L434.4 220.4L436.4 220.5L438.4 220.8L440.4 221.1L442.3 221.6L444.2 222.1L445.9 222.7L447.5 223.4L449.0 224.2L450.4 225.1L451.8 226.1L453.0 227.3L454.2 228.4L455.2 229.7L456.1 230.9L456.9 232.2L457.5 233.4L458.0 234.8L458.4 236.2L458.7 237.6L458.8 239.0L458.9 240.4L458.8 241.9L458.6 243.3L458.3 244.7L457.8 246.1L457.2 247.6L456.5 249.1L455.7 250.5L454.8 251.9L453.9 253.2L452.9 254.4L451.8 255.4L450.6 256.5L449.4 257.4L448.0 258.3L446.7 259.1L445.2 259.8L443.8 260.5L442.4 261.1L441.0 261.6L439.5 262.0L438.0 262.3L436.5 262.6L434.9 262.8L433.4 263.0L431.8 263.1L430.3 263.3L428.7 263.4L427.0 263.5L425.2 263.5L423.4 263.5L421.8 263.5L420.3 263.5L419.0 263.5L418.1 263.5M430.3 263.4L431.2 263.4L432.4 263.4L433.8 263.4L435.4 263.4L437.1 263.5L438.9 263.7L440.7 264.0L442.4 264.6L444.2 265.3L446.1 266.3L448.1 267.3L450.2 268.5L452.2 269.8L454.1 271.1L455.8 272.5L457.3 273.9L458.6 275.3L459.7 276.7L460.7 278.2L461.6 279.8L462.4 281.4L463.0 282.9L463.5 284.5L463.9 286.1L464.1 287.6L464.3 289.2L464.2 290.8L464.1 292.3L463.8 293.9L463.4 295.4L463.0 296.9L462.4 298.3L461.7 299.6L461.0 300.9L460.1 302.2L459.1 303.4L458.1 304.5L456.9 305.6L455.6 306.6L454.2 307.6L452.7 308.4L450.9 309.2L449.1 309.9L447.2 310.6L445.2 311.1L443.1 311.6L441.1 312.0L439.1 312.3L437.1 312.4L435.0 312.5L432.8 312.6L430.7 312.5L428.5 312.3L426.5 312.0L424.4 311.6L422.5 311.2L420.6 310.5L418.8 309.7L416.9 308.8L415.1 307.8L413.4 306.8L411.9 305.7L410.4 304.7L409.2 303.8L408.1 302.9L407.2 301.9L406.5 300.9L405.8 300.0L405.3 299.1L404.8 298.3L404.4 297.7L404.1 297.2"/><path d="M405.3 229.2L406.1 228.7L407.1 228.1L408.3 227.3L409.7 226.4L411.2 225.5L412.7 224.6L414.4 223.8L416.0 223.2L417.7 222.7L419.5 222.3L421.5 221.9L423.5 221.6L425.5 221.3L427.5 221.1L429.6 221.0L431.5 221.0L433.4 221.1L435.4 221.3L437.4 221.6L439.4 221.9L441.3 222.3L443.2 222.8L444.9 223.4L446.5 224.1L448.0 224.9L449.4 225.9L450.8 226.9L452.0 228.0L453.2 229.2L454.2 230.4L455.1 231.7L455.9 232.9L456.5 234.2L457.0 235.5L457.4 236.9L457.7 238.3L457.8 239.8L457.9 241.2L457.8 242.6L457.6 244.0L457.3 245.5L456.8 246.9L456.2 248.4L455.5 249.9L454.7 251.3L453.8 252.7L452.9 254.0L451.9 255.1L450.8 256.2L449.6 257.2L448.4 258.2L447.0 259.0L445.7 259.8L444.2 260.6L442.8 261.2L441.4 261.8L440.0 262.3L438.5 262.7L437.0 263.1L435.5 263.3L433.9 263.6L432.4 263.7L430.8 263.9L429.3 264.0L427.7 264.2L426.0 264.2L424.2 264.3L422.4 264.3L420.8 264.3L419.3 264.2L418.0 264.2L417.1 264.2M429.3 264.1L430.2 264.2L431.4 264.2L432.8 264.1L434.4 264.2L436.1 264.2L437.9 264.4L439.7 264.8L441.4 265.3L443.2 266.1L445.1 267.0L447.1 268.1L449.2 269.3L451.2 270.6L453.1 271.9L454.8 273.3L456.3 274.6L457.6 276.0L458.7 277.5L459.7 279.0L460.6 280.6L461.4 282.1L462.0 283.7L462.5 285.3L462.9 286.8L463.1 288.4L463.3 290.0L463.2 291.5L463.1 293.1L462.8 294.7L462.4 296.2L462.0 297.6L461.4 299.0L460.7 300.4L460.0 301.7L459.1 302.9L458.1 304.2L457.1 305.3L455.9 306.4L454.6 307.4L453.2 308.3L451.7 309.2L449.9 310.0L448.1 310.7L446.2 311.3L444.2 311.9L442.1 312.4L440.1 312.8L438.1 313.0L436.1 313.2L434.0 313.3L431.8 313.3L429.7 313.2L427.5 313.1L425.5 312.8L423.4 312.4L421.5 311.9L419.6 311.3L417.8 310.5L415.9 309.6L414.1 308.6L412.4 307.5L410.9 306.5L409.4 305.5L408.2 304.5L407.1 303.6L406.2 302.7L405.5 301.7L404.8 300.8L404.3 299.9L403.8 299.1L403.4 298.4L403.1 297.9"/><path d="M404.3 230.0L405.1 229.5L406.1 228.8L407.3 228.0L408.7 227.1L410.2 226.2L411.7 225.4L413.4 224.6L415.0 224.0L416.7 223.5L418.5 223.1L420.5 222.7L422.5 222.3L424.5 222.1L426.5 221.9L428.6 221.8L430.5 221.8L432.4 221.9L434.4 222.1L436.4 222.3L438.4 222.7L440.3 223.1L442.2 223.6L443.9 224.2L445.5 224.9L447.0 225.7L448.4 226.6L449.8 227.7L451.0 228.8L452.2 230.0L453.2 231.2L454.1 232.5L454.9 233.7L455.5 235.0L456.0 236.3L456.4 237.7L456.7 239.1L456.8 240.5L456.9 242.0L456.8 243.4L456.6 244.8L456.3 246.2L455.8 247.7L455.2 249.2L454.5 250.6L453.7 252.1L452.8 253.4L451.9 254.7L450.9 255.9L449.8 257.0L448.6 258.0L447.4 258.9L446.0 259.8L444.7 260.6L443.2 261.3L441.8 262.0L440.4 262.6L439.0 263.1L437.5 263.5L436.0 263.8L434.5 264.1L432.9 264.3L431.4 264.5L429.8 264.7L428.3 264.8L426.7 264.9L425.0 265.0L423.2 265.0L421.4 265.0L419.8 265.0L418.3 265.0L417.0 265.0L416.1 265.0M428.3 264.9L429.2 264.9L430.4 264.9L431.8 264.9L433.4 264.9L435.1 265.0L436.9 265.2L438.7 265.6L440.4 266.1L442.2 266.9L444.1 267.8L446.1 268.9L448.2 270.1L450.2 271.3L452.1 272.7L453.8 274.0L455.3 275.4L456.6 276.8L457.7 278.2L458.7 279.8L459.6 281.3L460.4 282.9L461.0 284.5L461.5 286.1L461.9 287.6L462.1 289.1L462.3 290.7L462.2 292.3L462.1 293.9L461.8 295.4L461.4 297.0L461.0 298.4L460.4 299.8L459.7 301.1L459.0 302.4L458.1 303.7L457.1 304.9L456.1 306.1L454.9 307.2L453.6 308.2L452.2 309.1L450.7 309.9L448.9 310.7L447.1 311.5L445.2 312.1L443.2 312.7L441.1 313.1L439.1 313.5L437.1 313.8L435.1 314.0L433.0 314.1L430.8 314.1L428.7 314.0L426.5 313.8L424.5 313.6L422.4 313.2L420.5 312.7L418.6 312.1L416.8 311.3L414.9 310.4L413.1 309.3L411.4 308.3L409.9 307.2L408.4 306.2L407.2 305.3L406.1 304.4L405.2 303.4L404.5 302.5L403.8 301.5L403.3 300.7L402.8 299.9L402.4 299.2L402.1 298.7"/><path d="M403.3 230.8L404.1 230.3L405.1 229.6L406.3 228.8L407.7 227.9L409.2 227.0L410.7 226.1L412.4 225.4L414.0 224.8L415.7 224.3L417.5 223.8L419.5 223.4L421.5 223.1L423.5 222.8L425.5 222.7L427.6 222.6L429.5 222.6L431.4 222.7L433.4 222.8L435.4 223.1L437.4 223.4L439.3 223.9L441.2 224.4L442.9 225.0L444.5 225.7L446.0 226.5L447.4 227.4L448.8 228.4L450.0 229.6L451.2 230.7L452.2 232.0L453.1 233.2L453.9 234.5L454.5 235.7L455.0 237.1L455.4 238.5L455.7 239.9L455.8 241.3L455.9 242.7L455.8 244.2L455.6 245.6L455.3 247.0L454.8 248.4L454.2 249.9L453.5 251.4L452.7 252.8L451.8 254.2L450.9 255.5L449.9 256.7L448.8 257.7L447.6 258.8L446.4 259.7L445.0 260.6L443.7 261.4L442.2 262.1L440.8 262.8L439.4 263.4L438.0 263.9L436.5 264.3L435.0 264.6L433.5 264.9L431.9 265.1L430.4 265.3L428.8 265.4L427.3 265.6L425.7 265.7L424.0 265.8L422.2 265.8L420.4 265.8L418.8 265.8L417.3 265.8L416.0 265.8L415.1 265.8M427.3 265.7L428.2 265.7L429.4 265.7L430.8 265.7L432.4 265.7L434.1 265.8L435.9 266.0L437.7 266.3L439.4 266.9L441.2 267.6L443.1 268.6L445.1 269.6L447.2 270.8L449.2 272.1L451.1 273.4L452.8 274.8L454.3 276.2L455.6 277.6L456.7 279.0L457.7 280.5L458.6 282.1L459.4 283.7L460.0 285.2L460.5 286.8L460.9 288.4L461.1 289.9L461.3 291.5L461.2 293.1L461.1 294.6L460.8 296.2L460.4 297.7L460.0 299.2L459.4 300.6L458.7 301.9L458.0 303.2L457.1 304.5L456.1 305.7L455.1 306.8L453.9 307.9L452.6 308.9L451.2 309.9L449.7 310.7L447.9 311.5L446.1 312.2L444.2 312.9L442.2 313.4L440.1 313.9L438.1 314.3L436.1 314.6L434.1 314.7L432.0 314.8L429.8 314.9L427.7 314.8L425.5 314.6L423.5 314.3L421.4 313.9L419.5 313.5L417.6 312.8L415.8 312.0L413.9 311.1L412.1 310.1L410.4 309.1L408.9 308.0L407.4 307.0L406.2 306.1L405.1 305.2L404.2 304.2L403.5 303.2L402.8 302.3L402.3 301.4L401.8 300.6L401.4 300.0L401.1 299.5"/><path d="M402.3 231.5L403.1 231.0L404.1 230.4L405.3 229.6L406.7 228.7L408.2 227.8L409.7 226.9L411.4 226.1L413.0 225.5L414.7 225.0L416.5 224.6L418.5 224.2L420.5 223.9L422.5 223.6L424.5 223.4L426.6 223.3L428.5 223.3L430.4 223.4L432.4 223.6L434.4 223.9L436.4 224.2L438.3 224.6L440.2 225.1L441.9 225.7L443.5 226.4L445.0 227.2L446.4 228.2L447.8 229.2L449.0 230.3L450.2 231.5L451.2 232.7L452.1 234.0L452.9 235.2L453.5 236.5L454.0 237.8L454.4 239.2L454.7 240.6L454.8 242.1L454.9 243.5L454.8 244.9L454.6 246.3L454.3 247.8L453.8 249.2L453.2 250.7L452.5 252.2L451.7 253.6L450.8 255.0L449.9 256.3L448.9 257.4L447.8 258.5L446.6 259.5L445.4 260.5L444.0 261.3L442.7 262.1L441.2 262.9L439.8 263.5L438.4 264.1L437.0 264.6L435.5 265.0L434.0 265.4L432.5 265.6L430.9 265.9L429.4 266.0L427.8 266.2L426.3 266.3L424.7 266.5L423.0 266.5L421.2 266.6L419.4 266.6L417.8 266.6L416.3 266.5L415.0 266.5L414.1 266.5M426.3 266.4L427.2 266.5L428.4 266.5L429.8 266.4L431.4 266.5L433.1 266.5L434.9 266.7L436.7 267.1L438.4 267.6L440.2 268.4L442.1 269.3L444.1 270.4L446.2 271.6L448.2 272.9L450.1 274.2L451.8 275.6L453.3 276.9L454.6 278.3L455.7 279.8L456.7 281.3L457.6 282.9L458.4 284.4L459.0 286.0L459.5 287.6L459.9 289.1L460.1 290.7L460.3 292.3L460.2 293.8L460.1 295.4L459.8 297.0L459.4 298.5L459.0 299.9L458.4 301.3L457.7 302.7L457.0 304.0L456.1 305.2L455.1 306.5L454.1 307.6L452.9 308.7L451.6 309.7L450.2 310.6L448.7 311.5L446.9 312.3L445.1 313.0L443.2 313.6L441.2 314.2L439.1 314.7L437.1 315.1L435.1 315.3L433.1 315.5L431.0 315.6L428.8 315.6L426.7 315.5L424.5 315.4L422.5 315.1L420.4 314.7L418.5 314.2L416.6 313.6L414.8 312.8L412.9 311.9L411.1 310.9L409.4 309.8L407.9 308.8L406.4 307.8L405.2 306.8L404.1 305.9L403.2 305.0L402.5 304.0L401.8 303.1L401.3 302.2L400.8 301.4L400.4 300.7L400.1 300.2"/></g>
<g fill="#6b3a0c" fill-rule="evenodd"><path d="M586.2 284.1L585.8 289.4L585.0 294.4L583.9 299.2L582.3 303.7L580.4 307.9L578.2 311.9L575.6 315.5L572.7 318.8L569.5 321.7L566.0 324.2L562.2 326.4L558.1 328.2L553.8 329.6L549.3 330.6L544.6 331.3L539.8 331.5L534.8 331.4L529.6 330.8L489.3 325.2L495.3 223.6L530.3 227.1L539.0 228.3L547.1 230.2L554.5 232.8L561.2 236.0L567.2 239.9L572.4 244.5L576.9 249.7L580.5 255.5L583.3 261.8L585.1 268.7L586.1 276.1L586.2 284.1ZM570.9 282.3L570.9 276.0L570.2 270.2L568.9 264.8L566.9 259.9L564.2 255.5L561.0 251.5L557.1 248.0L552.7 245.0L547.7 242.5L542.1 240.5L536.0 239.0L529.4 238.1L508.9 235.9L504.4 315.9L528.5 319.2L532.4 319.6L536.2 319.7L539.8 319.5L543.3 318.9L546.7 318.1L550.0 317.0L553.0 315.6L555.8 313.8L558.4 311.8L560.8 309.6L563.0 307.0L564.9 304.2L566.6 301.1L568.0 297.8L569.1 294.2L570.0 290.5L570.6 286.5L570.9 282.3Z"/><path d="M585.5 284.8L585.1 290.2L584.3 295.2L583.1 300.0L581.6 304.5L579.7 308.7L577.4 312.7L574.8 316.3L571.9 319.6L568.7 322.5L565.2 325.0L561.5 327.2L557.4 329.0L553.1 330.4L548.6 331.4L543.9 332.0L539.0 332.3L534.0 332.1L528.8 331.6L488.6 326.0L494.6 224.4L529.6 227.9L538.3 229.1L546.4 231.0L553.8 233.6L560.4 236.8L566.4 240.7L571.7 245.3L576.2 250.5L579.8 256.2L582.5 262.6L584.4 269.4L585.4 276.9L585.5 284.8ZM570.2 283.0L570.1 276.8L569.5 270.9L568.1 265.6L566.1 260.7L563.5 256.2L560.2 252.2L556.4 248.7L551.9 245.7L547.0 243.3L541.4 241.3L535.3 239.8L528.7 238.8L508.2 236.7L503.7 316.7L527.7 320.0L531.7 320.4L535.4 320.4L539.1 320.2L542.6 319.7L546.0 318.9L549.2 317.7L552.3 316.3L555.1 314.6L557.7 312.6L560.1 310.3L562.2 307.8L564.2 304.9L565.8 301.8L567.2 298.5L568.4 295.0L569.3 291.2L569.8 287.2L570.2 283.0Z"/><path d="M584.8 285.6L584.3 290.9L583.5 296.0L582.4 300.7L580.9 305.2L579.0 309.5L576.7 313.4L574.1 317.1L571.2 320.3L568.0 323.2L564.5 325.8L560.7 327.9L556.6 329.7L552.3 331.2L547.8 332.2L543.2 332.8L538.3 333.0L533.3 332.9L528.1 332.4L487.8 326.7L493.8 225.1L528.8 228.6L537.6 229.9L545.6 231.8L553.0 234.3L559.7 237.6L565.7 241.5L571.0 246.0L575.4 251.3L579.1 257.0L581.8 263.3L583.7 270.2L584.7 277.6L584.8 285.6ZM569.4 283.8L569.4 277.5L568.7 271.7L567.4 266.3L565.4 261.4L562.8 257.0L559.5 253.0L555.6 249.5L551.2 246.5L546.2 244.0L540.7 242.1L534.6 240.6L527.9 239.6L507.4 237.5L502.9 317.5L527.0 320.7L530.9 321.1L534.7 321.2L538.4 321.0L541.9 320.5L545.3 319.6L548.5 318.5L551.5 317.1L554.4 315.4L557.0 313.4L559.3 311.1L561.5 308.5L563.4 305.7L565.1 302.6L566.5 299.3L567.6 295.8L568.5 292.0L569.1 288.0L569.4 283.8Z"/><path d="M584.0 286.4L583.6 291.7L582.8 296.7L581.7 301.5L580.1 306.0L578.2 310.2L576.0 314.2L573.4 317.8L570.5 321.1L567.3 324.0L563.8 326.5L560.0 328.7L555.9 330.5L551.6 331.9L547.1 332.9L542.4 333.6L537.6 333.8L532.6 333.7L527.4 333.1L487.1 327.5L493.1 225.9L528.1 229.4L536.8 230.6L544.9 232.5L552.3 235.1L559.0 238.3L565.0 242.2L570.2 246.8L574.7 252.0L578.3 257.8L581.1 264.1L582.9 271.0L583.9 278.4L584.0 286.4ZM568.7 284.6L568.7 278.3L568.0 272.5L566.7 267.1L564.7 262.2L562.0 257.8L558.8 253.8L554.9 250.3L550.5 247.3L545.5 244.8L539.9 242.8L533.8 241.3L527.2 240.4L506.7 238.2L502.2 318.2L526.3 321.5L530.2 321.9L534.0 322.0L537.6 321.8L541.1 321.2L544.5 320.4L547.8 319.3L550.8 317.9L553.6 316.1L556.2 314.1L558.6 311.9L560.8 309.3L562.7 306.5L564.4 303.4L565.8 300.1L566.9 296.5L567.8 292.8L568.4 288.8L568.7 284.6Z"/><path d="M583.3 287.1L582.9 292.5L582.1 297.5L580.9 302.3L579.4 306.8L577.5 311.0L575.2 315.0L572.6 318.6L569.7 321.9L566.5 324.8L563.0 327.3L559.3 329.5L555.2 331.3L550.9 332.7L546.4 333.7L541.7 334.3L536.8 334.6L531.8 334.4L526.6 333.9L486.4 328.3L492.4 226.7L527.4 230.2L536.1 231.4L544.2 233.3L551.6 235.9L558.2 239.1L564.2 243.0L569.5 247.6L574.0 252.8L577.6 258.5L580.3 264.9L582.2 271.7L583.2 279.2L583.3 287.1ZM568.0 285.3L567.9 279.1L567.3 273.2L565.9 267.9L563.9 263.0L561.3 258.5L558.0 254.5L554.2 251.0L549.7 248.0L544.8 245.6L539.2 243.6L533.1 242.1L526.5 241.1L506.0 239.0L501.5 319.0L525.5 322.3L529.5 322.7L533.2 322.7L536.9 322.5L540.4 322.0L543.8 321.2L547.0 320.0L550.1 318.6L552.9 316.9L555.5 314.9L557.9 312.6L560.0 310.1L562.0 307.2L563.6 304.1L565.0 300.8L566.2 297.3L567.1 293.5L567.6 289.5L568.0 285.3Z"/><path d="M582.6 287.9L582.1 293.2L581.3 298.3L580.2 303.0L578.7 307.5L576.8 311.8L574.5 315.7L571.9 319.4L569.0 322.6L565.8 325.5L562.3 328.1L558.5 330.2L554.4 332.0L550.1 333.5L545.6 334.5L541.0 335.1L536.1 335.3L531.1 335.2L525.9 334.7L485.6 329.0L491.6 227.4L526.6 230.9L535.4 232.2L543.4 234.1L550.8 236.6L557.5 239.9L563.5 243.8L568.8 248.3L573.2 253.6L576.9 259.3L579.6 265.6L581.5 272.5L582.5 279.9L582.6 287.9ZM567.2 286.1L567.2 279.8L566.5 274.0L565.2 268.6L563.2 263.7L560.6 259.3L557.3 255.3L553.4 251.8L549.0 248.8L544.0 246.3L538.5 244.4L532.4 242.9L525.7 241.9L505.2 239.8L500.7 319.8L524.8 323.0L528.7 323.4L532.5 323.5L536.2 323.3L539.7 322.8L543.1 321.9L546.3 320.8L549.3 319.4L552.2 317.7L554.8 315.7L557.1 313.4L559.3 310.8L561.2 308.0L562.9 304.9L564.3 301.6L565.4 298.1L566.3 294.3L566.9 290.3L567.2 286.1Z"/></g>
<path d="M401.3 232.3L402.1 231.8L403.1 231.1L404.3 230.3L405.7 229.4L407.2 228.5L408.7 227.7L410.4 226.9L412.0 226.3L413.7 225.8L415.5 225.4L417.5 225.0L419.5 224.6L421.5 224.4L423.5 224.2L425.6 224.1L427.5 224.1L429.4 224.2L431.4 224.4L433.4 224.6L435.4 225.0L437.3 225.4L439.2 225.9L440.9 226.5L442.5 227.2L444.0 228.0L445.4 228.9L446.8 230.0L448.0 231.1L449.2 232.3L450.2 233.5L451.1 234.8L451.9 236.0L452.5 237.3L453.0 238.6L453.4 240.0L453.7 241.4L453.8 242.8L453.9 244.3L453.8 245.7L453.6 247.1L453.3 248.5L452.8 250.0L452.2 251.5L451.5 252.9L450.7 254.4L449.8 255.7L448.9 257.0L447.9 258.2L446.8 259.3L445.6 260.3L444.4 261.2L443.0 262.1L441.7 262.9L440.2 263.6L438.8 264.3L437.4 264.9L436.0 265.4L434.5 265.8L433.0 266.1L431.5 266.4L429.9 266.6L428.4 266.8L426.8 267.0L425.3 267.1L423.7 267.2L422.0 267.3L420.2 267.3L418.4 267.3L416.8 267.3L415.3 267.3L414.0 267.3L413.1 267.3M425.3 267.2L426.2 267.2L427.4 267.2L428.8 267.2L430.4 267.2L432.1 267.3L433.9 267.5L435.7 267.9L437.4 268.4L439.2 269.2L441.1 270.1L443.1 271.2L445.2 272.4L447.2 273.6L449.1 275.0L450.8 276.3L452.3 277.7L453.6 279.1L454.7 280.5L455.7 282.1L456.6 283.6L457.4 285.2L458.0 286.8L458.5 288.4L458.9 289.9L459.1 291.4L459.3 293.0L459.2 294.6L459.1 296.2L458.8 297.7L458.4 299.3L458.0 300.7L457.4 302.1L456.7 303.4L456.0 304.7L455.1 306.0L454.1 307.2L453.1 308.4L451.9 309.5L450.6 310.5L449.2 311.4L447.7 312.2L445.9 313.0L444.1 313.8L442.2 314.4L440.2 315.0L438.1 315.4L436.1 315.8L434.1 316.1L432.1 316.3L430.0 316.4L427.8 316.4L425.7 316.3L423.5 316.1L421.5 315.9L419.4 315.5L417.5 315.0L415.6 314.4L413.8 313.6L411.9 312.7L410.1 311.6L408.4 310.6L406.9 309.5L405.4 308.5L404.2 307.6L403.1 306.7L402.2 305.7L401.5 304.8L400.8 303.8L400.3 303.0L399.8 302.2L399.4 301.5L399.1 301.0" stroke="#d8700f" stroke-width="9.8"/>
<path d="M581.8 288.7L581.4 294.0L580.6 299.0L579.5 303.8L577.9 308.3L576.0 312.5L573.8 316.5L571.2 320.1L568.3 323.4L565.1 326.3L561.6 328.8L557.8 331.0L553.7 332.8L549.4 334.2L544.9 335.2L540.2 335.9L535.4 336.1L530.4 336.0L525.2 335.4L484.9 329.8L490.9 228.2L525.9 231.7L534.6 232.9L542.7 234.8L550.1 237.4L556.8 240.6L562.8 244.5L568.0 249.1L572.5 254.3L576.1 260.1L578.9 266.4L580.7 273.3L581.7 280.7L581.8 288.7ZM566.5 286.9L566.5 280.6L565.8 274.8L564.5 269.4L562.5 264.5L559.8 260.1L556.6 256.1L552.7 252.6L548.3 249.6L543.3 247.1L537.7 245.1L531.6 243.6L525.0 242.7L504.5 240.5L500.0 320.5L524.1 323.8L528.0 324.2L531.8 324.3L535.4 324.1L538.9 323.5L542.3 322.7L545.6 321.6L548.6 320.2L551.4 318.4L554.0 316.4L556.4 314.2L558.6 311.6L560.5 308.8L562.2 305.7L563.6 302.4L564.7 298.8L565.6 295.1L566.2 291.1L566.5 286.9Z" fill="#d8700f" fill-rule="evenodd"/>
</g>
</svg><!--/SCENE-->
  <div class="abs" style="left:0;top:0;width:613px;height:23.4px;background:linear-gradient(#c6c6c6 0px,#d6d6d6 8px,#e2e2e2 23px);"></div>
  <div class="abs" style="left:0;top:23.4px;width:613px;height:3.2px;background:#ebebeb;border-top:0.7px solid #c2c2c2;box-sizing:border-box"></div>
  <div class="abs" style="left:0;top:26.3px;width:613px;height:0.9px;background:#b4b4b4;"></div>
  <div class="abs" style="left:0;top:27.1px;width:613px;height:25.8px;background:#fff;"></div>
  <div class="abs" style="left:-0.4px;top:0;width:0.9px;height:53px;background:#aaa;"></div>
  <div class="tab" style="left:4.7px;width:60.2px;top:2.9px;height:21.2px;background:linear-gradient(#fdfdfd,#f4f4f4 60%,#ececec);font-weight:bold;color:#111;"><span style="left:7.8px;top:2.4px;letter-spacing:0.35px">Сцена</span></div>
  <div class="tab" style="left:65.2px;width:82.8px;"><span style="left:6.3px;letter-spacing:0.3px">Сценарий</span></div>
  <div class="tab" style="left:148.3px;width:156px;"><span style="left:7.8px;letter-spacing:0.32px">Текстовый редактор</span></div>
  <div class="abs" style="left:54.8px;top:33.1px;font-size:13px;line-height:17px;letter-spacing:0.285px;white-space:nowrap;color:#111;">Анимация отсутствует</div>
  <div class="vd" style="left:255.2px"></div>
  <div class="vd" style="left:345.2px"></div>
  <div class="vd" style="left:517.4px"></div>
  <svg class="abs" style="left:264.1px;top:28px" width="80" height="24" fill="none" stroke="#666" stroke-width="1.75">
    <path d="M2.8 12H19.4M11.1 3.6V20.4"/>
    <g fill="#686868" stroke="none"><path d="M11.1 2.2L14 6.6H8.2Z"/><path d="M11.1 21.4L14 17H8.2Z"/><path d="M1.5 12L5.8 9.1V14.9Z"/><path d="M20.6 12L16.3 9.1V14.9Z"/></g>
    <rect x="10.5" y="11.4" width="1.2" height="1.2" fill="#fff" stroke="none"/>
    <path d="M34.4 17.1A8.4 5.7 0 1 1 40 16.8"/>
    <path d="M35.6 16.8L41.2 13.4L40.4 19Z" fill="#686868" stroke="none"/>
    <rect x="55.2" y="4.2" width="16.4" height="15.8" rx="1.6"/>
    <path d="M55.3 11.9H63.3V19.8M63.3 11.9L68.4 6.8M63.6 6.6H68.7V11.7"/>
  </svg>
  <div class="ar" style="left:360.5px;letter-spacing:0.25px">16:9</div>
  <div class="ar" style="left:397.5px;letter-spacing:0.05px">16:10</div>
  <div class="ar" style="left:444.2px">3:2</div>
  <div class="ar" style="left:484.1px">4:3</div>
  <div class="abs" style="left:529.8px;top:33.3px;width:7.9px;height:13.5px;box-sizing:border-box;border:1.9px solid #606060;border-radius:1.8px;"></div>
</div>
</body></html>
